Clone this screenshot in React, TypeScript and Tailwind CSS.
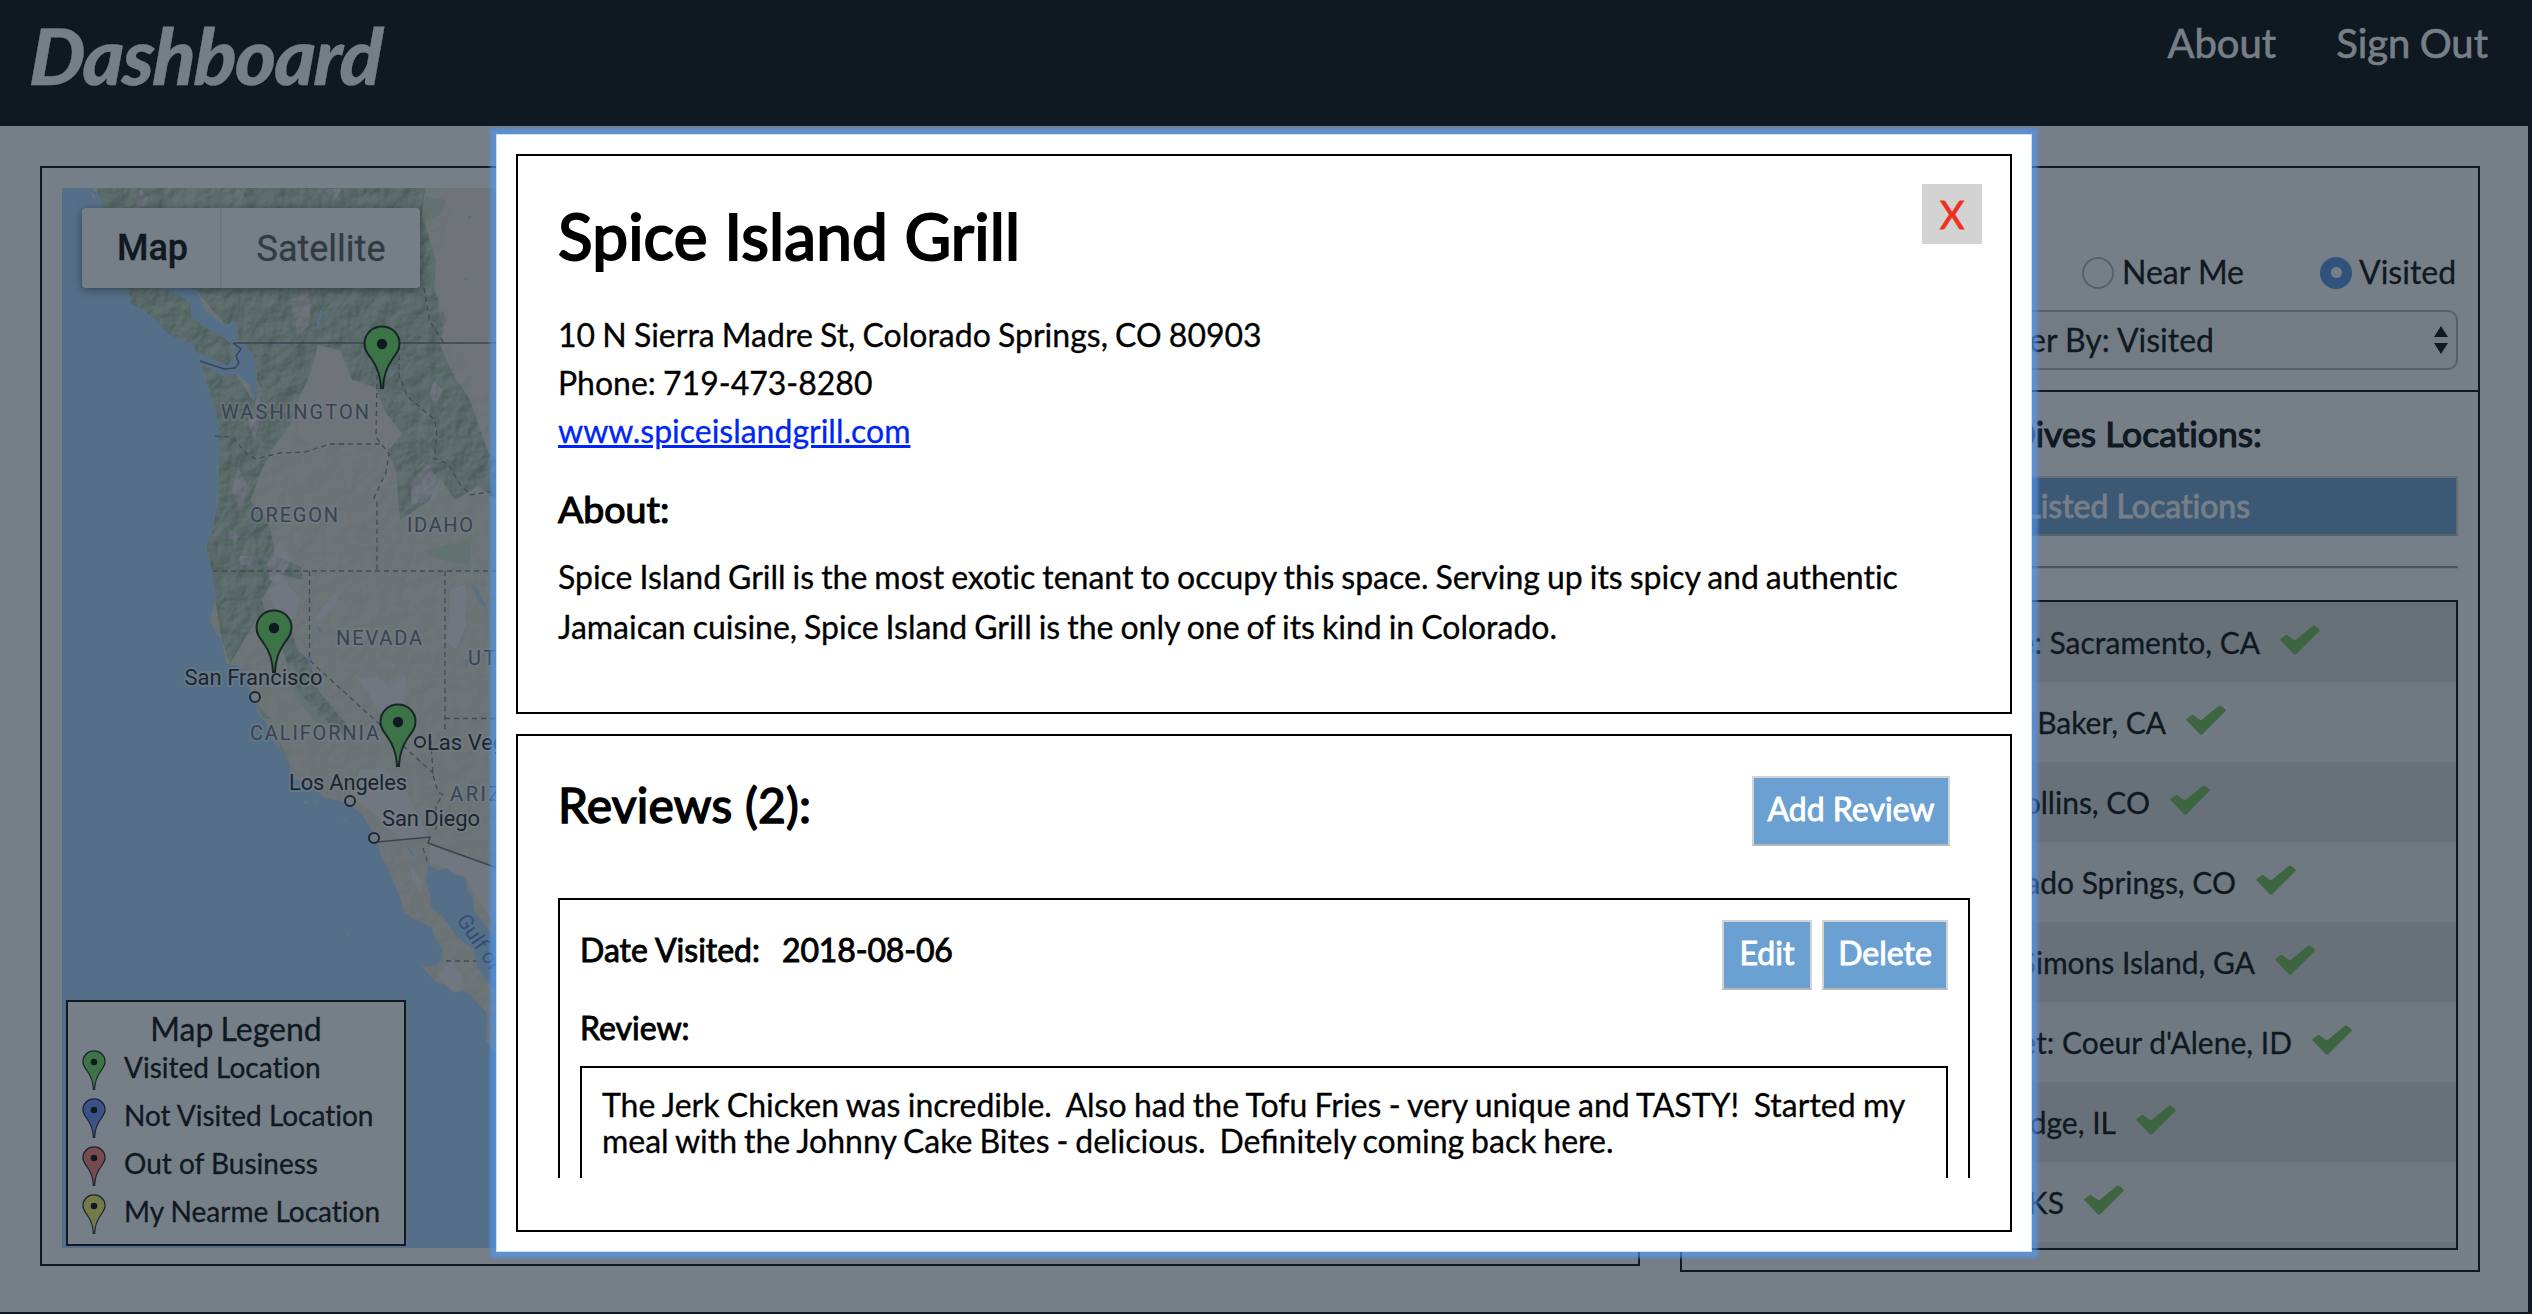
import React from "react";

const LAND =
  "M92 188 L100 196 L104 210 L100 220 L110 240 L112 262 L120 282 L128 286 L186 286 L196 290 L206 312 L225 325 L236 322 L238 340 L252 352 L257 375 L254 402 L249 384 L236 374 L222 376 L201 363 L204 375 L208 390 L215 408 L219 430 L220 445 L218 480 L217 505 L213 530 L206 546 L209 560 L213 575 L216 596 L214 606 L210 620 L215 632 L222 640 L224 652 L226 664 L240 666 L247 676 L250 692 L256 702 L258 714 L266 722 L272 738 L280 750 L290 764 L291 776 L310 786 L325 798 L346 802 L362 815 L373 832 L378 845 L382 858 L388 868 L394 884 L399 894 L404 912 L414 919 L432 928 L436 940 L443 950 L442 960 L434 967 L422 966 L430 976 L437 983 L446 984 L453 993 L462 990 L470 994 L477 1003 L487 1013 L486 1040 L500 1060 L520 1060 L520 1010 L496 992 L487 980 L477 967 L474 950 L457 937 L443 917 L431 907 L430 895 L426 880 L428 865 L438 870 L448 868 L454 875 L465 877 L467 890 L473 898 L474 910 L484 924 L496 938 L520 950 L520 188 Z";
const ISLAND =
  "M122 287 L132 298 L130 303 L148 314 L158 322 L166 332 L176 338 L193 345 L196 352 L212 358 L228 366 L234 356 L233 345 L222 336 L204 326 L192 318 L190 302 L180 296 L162 288 Z";
const FOREST = [
  "M95 188 L425 188 L422 215 L436 260 L434 288 L446 318 L440 345 L452 372 L470 400 L478 424 L488 452 L496 460 L496 500 L478 486 L455 500 L440 478 L430 500 L400 520 L396 470 L388 450 L402 434 L384 410 L376 388 L352 380 L340 350 L318 345 L310 375 L298 400 L290 425 L272 450 L262 470 L250 500 L268 520 L276 556 L300 566 L304 580 L276 574 L262 600 L270 625 L292 632 L298 650 L310 662 L318 690 L336 712 L352 730 L346 738 L318 714 L298 690 L282 650 L256 620 L244 640 L230 664 L222 640 L206 546 L218 500 L219 430 L201 363 L236 374 L254 402 L257 375 L238 340 L225 325 L196 290 L130 286 L104 210 Z",
  ISLAND,
  "M256 703 L272 720 L262 718 Z",
  "M278 738 L288 758 L280 750 Z",
];
const TAN = [
  "M318 345 L340 352 L350 378 L376 388 L384 410 L402 434 L388 452 L360 440 L320 446 L300 440 L298 412 L306 390 Z",
  "M440 188 L500 188 L500 400 L476 390 L460 350 L440 320 L436 270 L446 230 Z",
  "M290 300 L310 292 L310 326 L298 334 Z",
];
const GREY = [
  "M268 560 L280 540 L290 560 L280 584 L270 580 Z",
  "M268 590 L284 580 L300 600 L294 620 L276 612 Z",
  "M315 618 L328 600 L340 590 L336 605 L320 620 Z",
  "M360 680 L378 676 L388 688 L406 676 L404 700 L380 712 Z",
  "M450 590 L466 584 L466 625 L456 650 L446 640 L450 620 Z",
  "M238 468 L250 490 L240 508 L232 490 Z",
  "M230 530 L239 534 L236 542 L229 538 Z",
  "M240 556 L252 556 L250 566 L240 564 Z",
  "M410 482 L428 464 L438 480 L436 500 L412 504 Z",
  "M360 770 L384 768 L405 790 L428 836 L400 838 L370 810 L350 795 Z",
  "M430 846 L496 868 L496 925 L478 900 L465 876 L430 862 Z",
  "M410 864 L422 882 L420 892 L412 878 Z",
  "M438 975 L450 960 L462 975 L460 992 L450 990 Z",
  "M257 380 L262 392 L257 410 L254 400 Z",
  "M140 190 L148 196 L144 206 L134 210 Z",
  "M324 190 L342 188 L336 198 Z",
  "M248 420 L262 416 L254 440 Z",
  "M433 380 L442 390 L436 404 L430 396 Z",
];
const PALE_GREEN = [
  "M164 188 L238 188 L247 200 L246 220 L170 220 Z",
  "M425 196 L446 200 L442 214 L424 222 Z",
  "M408 400 L430 408 L426 440 L408 430 Z",
  "M285 660 L298 670 L312 700 L330 726 L316 724 L292 690 Z",
  "M424 550 L470 540 L470 565 L440 560 Z",
];
const LAKES = [
  "M470 582 L478 590 L486 606 L487 610 L478 600 Z",
  "M309 654 L312 660 L310 664 L306 658 Z",
  "M316 625 L322 630 L320 634 Z",
  "M298 568 L301 572 L299 576 Z",
  "M264 556 L268 560 L265 562 Z",
  "M465 660 L470 658 L466 668 Z",
  "M440 378 L443 382 L441 388 Z",
  "M467 217 L472 215 L470 219 Z",
  "M464 278 L469 280 L466 281 Z",
  "M404 842 L414 854 L412 856 Z",
  "M388 365 L394 372 L390 378 Z",
  "M320 310 L323 312 L318 330 L316 328 Z",
];
const DASHED = [
  "M215 436 L232 437 L245 452 L255 459 L280 453 L305 452 L330 444 L380 444",
  "M377 375 L376 437 L389 454 L386 472 L374 498 L377 502 L377 571",
  "M213 571 L496 571",
  "M309.500 571 L309.500 660 L320 670 L434 774",
  "M445 571 L445 732",
  "M445 718.500 L496 718.500",
  "M431 740 L433 775 L438 792 L443 795 L436 805 L436 832",
  "M399 355 L399 376 L408 397 L435 420 L437 436 L434 458 L448 464 L460 484 L470 495 L496 491",
  "M424 288 L430 322 L444 343",
  "M423 848 L428 864",
  "M446 961 L476 961",
];

function Pin({ color, className }: { color: string; className: string }) {
  return (
    <svg viewBox="0 0 38 64" preserveAspectRatio="none" className={className}>
      <path
        d="M19 1.500 C9 1.500 1.500 9 1.500 18.500 C1.500 25 4.500 28.500 8.500 34 C14 41.500 17.500 49 18 63 L20 63 C20.500 49 24 41.500 29.500 34 C33.500 28.500 36.500 25 36.500 18.500 C36.500 9 29 1.500 19 1.500 Z"
        fill={color}
        stroke="#000"
        strokeOpacity="0.85"
        strokeWidth="2"
      />
      <circle cx="19" cy="19" r="5.200" fill="#000" />
    </svg>
  );
}

const STATES: [string, number, number, number][] = [
  ["WASHINGTON", 221, 419, 148],
  ["OREGON", 250, 522, 88],
  ["IDAHO", 407, 532, 66],
  ["NEVADA", 336, 645, 86],
  ["CALIFORNIA", 250, 740, 129],
];
const CITIES: [string, number, number, number, number, number][] = [
  ["San Francisco", 184.5, 685, 138, 255, 697],
  ["Los Angeles", 289, 790, 118, 350, 801],
  ["San Diego", 382, 826, 98, 374, 838],
];

function MapCanvas() {
  return (
    <svg
      viewBox="62 188 1556 1060"
      className="block h-[1060px] w-[1556px] font-['Roboto',sans-serif]"
    >
      <defs>
        <clipPath id="land">
          <path d={LAND} />
          <path d={ISLAND} />
        </clipPath>
        <clipPath id="forest">
          <path d={FOREST[0]} />
          <path d={ISLAND} />
        </clipPath>
        <filter id="relief" x="0" y="0" width="100%" height="100%" colorInterpolationFilters="sRGB">
          <feTurbulence type="fractalNoise" baseFrequency="0.06" numOctaves="3" seed="4" result="n" />
          <feDiffuseLighting in="n" surfaceScale="5" lightingColor="#fff" result="l">
            <feDistantLight azimuth="225" elevation="38" />
          </feDiffuseLighting>
        </filter>
      </defs>
      <rect x="62" y="188" width="1556" height="1060" fill="#aadaff" />
      <path d={LAND} fill="#ece9d8" />
      <g clipPath="url(#land)">
        {FOREST.map((d) => (
          <path key={d} d={d} fill="#c0d9bb" />
        ))}
        {TAN.map((d) => (
          <path key={d} d={d} fill="#eae6d6" />
        ))}
        {PALE_GREEN.map((d) => (
          <path key={d} d={d} fill="#cce2c4" />
        ))}
        {GREY.map((d) => (
          <path key={d} d={d} fill="#f3edf0" />
        ))}
        <g clipPath="url(#forest)">
          <rect x="62" y="188" width="440" height="560" filter="url(#relief)" className="opacity-20 mix-blend-soft-light" />
        </g>
        <rect x="62" y="188" width="440" height="860" filter="url(#relief)" className="opacity-5 mix-blend-soft-light" />
        {LAKES.map((d) => (
          <path key={d} d={d} fill="#aadaff" />
        ))}
      </g>
      <path d="M304 802 L309 801 L306 804 Z M313 801 L318 802 L315 803 Z M342 817 L347 820 L346 821 Z M347 932 L349 937 L347 935 Z M90 192 L96 196 L94 200 Z" fill="#ece9d8" />
      <g fill="none" stroke="#7d7d86" strokeWidth="1.300" strokeDasharray="5 4">
        {DASHED.map((d) => (
          <path key={d} d={d} />
        ))}
      </g>
      <g fill="none" stroke="#6d6d76" strokeWidth="1.500">
        <path d="M234 343 L500 343" />
        <path d="M233 343 L241 349 L236 356 L239 363 L235 368 L224 369 L200 361" />
        <path d="M377 842 L430 837 L428 843 L500 869" />
      </g>
      <g fontSize="20" fill="#666c78" stroke="#fff" strokeOpacity="0.45" strokeWidth="4" strokeLinejoin="round" className="[paint-order:stroke]">
        {STATES.map(([t, x, y, w]) => (
          <text key={t} x={x} y={y} textLength={w}>
            {t}
          </text>
        ))}
        <text x="468" y="665" letterSpacing="2.600">UTAH</text>
        <text x="450" y="801" letterSpacing="2.600">ARIZ</text>
      </g>
      <g fontSize="22" fill="#1c1e24" stroke="#fff" strokeOpacity="0.5" strokeWidth="4" strokeLinejoin="round" className="[paint-order:stroke]">
        {CITIES.map(([t, x, y, w]) => (
          <text key={t} x={x} y={y} textLength={w}>
            {t}
          </text>
        ))}
        <text x="427" y="750">Las Veg</text>
      </g>
      <g fill="#fff" fillOpacity="0.6" stroke="#25272d" strokeWidth="2">
        {CITIES.map(([t, , , , cx, cy]) => (
          <circle key={t} cx={cx} cy={cy} r="5" />
        ))}
        <circle cx="420" cy="742" r="5" />
      </g>
      <text fontSize="21" fill="#5a87d6" transform="translate(456 920) rotate(56)">Gulf of</text>
    </svg>
  );
}

const LEGEND: [string, string][] = [
  ["#6ee65f", "Visited Location"],
  ["#6e91fd", "Not Visited Location"],
  ["#fd7f73", "Out of Business"],
  ["#fdf569", "My Nearme Location"],
];

function MapPanel() {
  return (
    <section className="h-[1100px] w-[1600px] border-2 border-black p-5">
      <div className="relative h-[1060px] overflow-hidden">
        <MapCanvas />
        <div className="absolute left-5 top-5 flex h-20 w-[338px] items-center rounded-[4px] bg-white font-['Roboto',sans-serif] text-[36px] shadow-[0_2px_8px_rgba(0,0,0,0.5)]">
          <div className="flex h-full w-[140px] items-center justify-center border-r-2 border-[#e8e8e8] pl-[3px] font-medium text-black">
            Map
          </div>
          <div className="flex h-full flex-1 items-center justify-center pt-px text-[#565656]">Satellite</div>
        </div>
        <Pin color="#6ee65f" className="absolute left-[301px] top-[137px] h-16 w-[38px]" />
        <Pin color="#6ee65f" className="absolute left-[193px] top-[421px] h-16 w-[38px]" />
        <Pin color="#6ee65f" className="absolute left-[317px] top-[515px] h-16 w-[38px]" />
        <div className="absolute left-1 top-[812px] h-[246px] w-[340px] border-2 border-black bg-white pl-[14px] pt-[7px]">
          <div className="pr-[14px] text-center text-[32px] leading-[39px] [word-spacing:-1px]">Map Legend</div>
          {LEGEND.map(([color, label]) => (
            <div key={label} className="flex h-12 items-start">
              <Pin color={color} className="mt-[2px] h-10 w-6" />
              <span className="ml-[18px] mt-[2px] text-[28px] leading-[34px]">{label}</span>
            </div>
          ))}
        </div>
      </div>
    </section>
  );
}

const ROWS: [string, string][] = [
  ["Cafe: Sacramento, CA", "pr-[136px]"],
  ["Baker, CA", "pr-[230px]"],
  ["Collins, CO", "pr-[246px]"],
  ["Colorado Springs, CO", "pr-[160px]"],
  ["St. Simons Island, GA", "pr-[141px]"],
  ["et: Coeur d'Alene, ID", "pr-[104px]"],
  ["Lodge, IL", "pr-[280px]"],
  ["KS", "pr-[332px]"],
];

function Check() {
  return (
    <svg viewBox="0 0 40 30" className="ml-5 mt-[23px] h-[30px] w-10 shrink-0">
      <path
        d="M0.800 13.800 L5.600 10.300 Q6.500 9.700 7.400 10.300 L15 15.500 L32.600 1 Q34 0 35.300 1 L39.300 4.200 Q40.300 5.200 39.300 6.200 L16.600 29 Q15.200 30.300 13.600 29 L0.800 15.600 Q-0.200 14.700 0.800 13.800 Z"
        fill="#6fc14f"
      />
    </svg>
  );
}

function SidePanel() {
  return (
    <aside className="h-[1106px] w-[800px] border-2 border-black">
      <div className="h-[224px] border-b-2 border-black px-5 pt-[80px]">
        <div className="flex h-[48px] items-center justify-end text-[32px] leading-[48px]">
          <span className="mt-[1px] size-8 rounded-full border-2 border-[#b4b4b8] bg-white" />
          <span className="ml-2 w-[122px] whitespace-nowrap">Near Me</span>
          <span className="ml-[76px] mt-[1px] flex size-8 items-center justify-center rounded-full bg-[#4f93e6]">
            <span className="size-[11px] rounded-full bg-white" />
          </span>
          <span className="ml-[7px] w-[99px] whitespace-nowrap">Visited</span>
        </div>
        <div className="mt-[14px] flex h-[60px] items-center justify-end rounded-[10px] border-2 border-[#b0b2b8] bg-[#f8f8f8] pr-2 text-[32px]">
          <span className="pr-[220px]">Filter By: Visited</span>
          <svg viewBox="0 0 14 28" className="h-7 w-[14px]">
            <path d="M7 0 L14 11 H0 Z M0 17 H14 L7 28 Z" fill="#000" />
          </svg>
        </div>
      </div>
      <div className="px-5 pt-[19px] text-right">
        <h2 className="pr-[196px] text-[35.500px] leading-[46px] [-webkit-text-stroke:1.200px_#000]">Dives Locations:</h2>
        <div className="mt-[19px] h-[60px] border-2 border-[#d3d3d3] border-b-[#b8b8b8] bg-[#6ba1d2] pr-[206px] text-[32px] leading-[56px] text-white [-webkit-text-stroke:0.900px_#fff]">
          View Listed Locations
        </div>
        <div className="mt-[30px] h-[3px] border-t-2 border-[#9a9a9a] bg-[#e6e6e6]" />
        <div className="mt-[31px] h-[650px] overflow-hidden border-2 border-black">
          {ROWS.map(([label, pad], i) => (
            <div
              key={label}
              className={`flex h-20 justify-end text-[30px] leading-[38px] ${pad} ${i % 2 ? "bg-[#f1f1f1]" : "bg-[#dddddd]"}`}
            >
              <span className="mt-[21px] whitespace-nowrap">{label}</span>
              <Check />
            </div>
          ))}
          <div className="h-20 bg-[#dddddd]" />
        </div>
      </div>
    </aside>
  );
}

function Button({ children, className }: { children: React.ReactNode; className: string }) {
  return (
    <button
      className={`block h-[70px] border-2 border-[#d3d3d3] border-b-[#b8b8b8] bg-[#6ba1d2] pb-1 text-center text-[32px] leading-[38px] text-white [-webkit-text-stroke:0.900px_#fff] ${className}`}
    >
      {children}
    </button>
  );
}

function Modal() {
  return (
    <div className="flex h-[1118px] w-[1536px] flex-col gap-5 bg-white p-5 shadow-[0_0_3px_6px_rgba(80,154,248,0.62),inset_0_0_0_1px_#cfe0f5]">
      <section className="flex h-[560px] items-start justify-between border-2 border-black pl-10 pr-7 pt-7">
        <div className="pt-[14px] text-[32px]">
          <h1 className="text-[64px] leading-[76px] tracking-[0.120px] [-webkit-text-stroke:2px_#000]">Spice Island Grill</h1>
          <div className="mt-[37px] leading-[48px] [word-spacing:-1px]">
            <div>10 N Sierra Madre St, Colorado Springs, CO 80903</div>
            <div>Phone: 719-473-8280</div>
            <div>
              <a className="text-[#0026f5] underline">www.spiceislandgrill.com</a>
            </div>
          </div>
          <h3 className="mt-[31px] text-[37.500px] leading-[46px] [-webkit-text-stroke:1.200px_#000]">About:</h3>
          <p className="mt-5 whitespace-nowrap leading-[50px] [word-spacing:-1.200px]">
            Spice Island Grill is the most exotic tenant to occupy this space. Serving up its spicy and authentic
            <br />
            Jamaican cuisine, Spice Island Grill is the only one of its kind in Colorado.
          </p>
        </div>
        <button className="-ml-20 flex size-[60px] shrink-0 items-center justify-center bg-[#d3d3d3] text-[38px] text-[#f0301f] [-webkit-text-stroke:0.900px_#f0301f]">
          X
        </button>
      </section>
      <section className="h-[498px] border-2 border-black px-10 pt-10">
        <div className="flex h-[122px] items-start justify-between pr-5">
          <h2 className="text-[48px] leading-[58px] tracking-[0.200px] [-webkit-text-stroke:1.500px_#000]">Reviews (2):</h2>
          <Button className="w-[198px]">Add Review</Button>
        </div>
        <div className="h-[280px] overflow-hidden">
          <article className="h-[400px] border-2 border-black p-5 text-[32px]">
            <div className="flex h-[82px] items-start">
              <div className="mt-[10px] flex flex-1 whitespace-pre leading-[40px] [-webkit-text-stroke:0.900px_#000]">
                <span className="w-[202px]">Date Visited:</span>
                <span className="tracking-[-0.150px]">2018-08-06</span>
              </div>
              <Button className="w-[90px]">Edit</Button>
              <Button className="ml-[10px] w-[126px]">Delete</Button>
            </div>
            <div className="mt-[6px] leading-[40px] [-webkit-text-stroke:0.900px_#000]">Review:</div>
            <div className="mt-[18px] h-[200px] whitespace-pre border-2 border-black px-5 pt-[19px] leading-[36px] [word-spacing:-0.900px]">
              <p>{"The Jerk Chicken was incredible.  Also had the Tofu Fries - very unique and TASTY!  Started my"}</p>
              <p className="[font-variant-ligatures:normal] [word-spacing:-1.300px]">
                {"meal with the Johnny Cake Bites - delicious.  Definitely coming back here."}
              </p>
            </div>
          </article>
        </div>
      </section>
    </div>
  );
}

export default function App() {
  return (
    <div className="relative h-[1314px] w-[2532px] overflow-hidden bg-black font-['Lato',sans-serif] text-black [-webkit-text-stroke:0.300px_currentColor] [font-variant-ligatures:none]">
      <header className="flex h-[126px] items-start justify-between pl-[29px] pr-[44px] text-white">
        <div className="origin-[0_75px] -skew-x-3 pt-[8px] text-[78px] font-black italic leading-[94px] tracking-[-1.400px]">
          Dashboard
        </div>
        <nav className="flex gap-[60px] pt-[19px] text-[40px] leading-[48px] [-webkit-text-stroke:0.600px_#fff] [word-spacing:-1px]">
          <a>About</a>
          <a>Sign Out</a>
        </nav>
      </header>
      <main className="flex h-[1186px] w-[2528px] items-start gap-10 bg-white pl-10 pt-10">
        <MapPanel />
        <SidePanel />
      </main>
      <div className="absolute inset-0 bg-[rgba(27,40,55,0.6)] pl-[496px] pt-[134px]">
        <Modal />
      </div>
    </div>
  );
}
